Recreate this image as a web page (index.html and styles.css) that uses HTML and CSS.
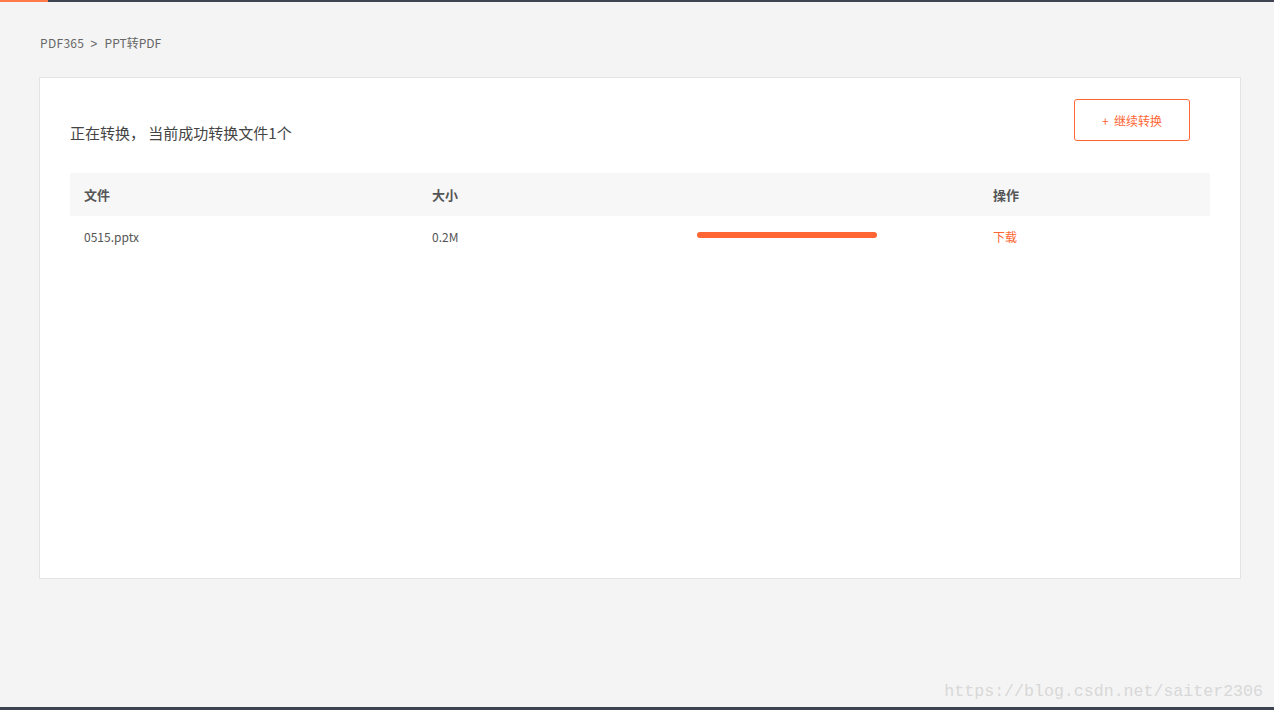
FILE: index.html
```html
<!DOCTYPE html>
<html lang="zh-CN">
<head>
<meta charset="utf-8">
<title>PPT转PDF - PDF365</title>
<link rel="stylesheet" href="styles.css">
</head>
<body>
    <div class="topbar"><span class="topbar-active"></span></div>
    <div class="page">
        <div class="crumbs">
            <a href="#">PDF365</a><span class="sep">&gt;</span><span>PPT转PDF</span>
        </div>
        <div class="card">
            <div class="card-head">
                <p class="status">正在转换， 当前成功转换文件1个</p>
                <button class="more-btn" type="button">+&nbsp; 继续转换</button>
            </div>
            <div class="file-table">
                <div class="row head">
                    <div>文件</div>
                    <div>大小</div>
                    <div></div>
                    <div>操作</div>
                </div>
                <div class="row">
                    <div>0515.pptx</div>
                    <div>0.2M</div>
                    <div><div class="progress"><div class="progress-bar" style="width:100%"></div></div></div>
                    <div><a class="dl" href="#">下载</a></div>
                </div>
            </div>
        </div>
    </div>
    <div class="watermark">https://blog.csdn.net/saiter2306</div>
    <div class="bottombar"></div>
</body>
</html>
```

FILE: styles.css
```css
html, body {
    height: 100%;
}
body {
    margin: 0;
    background-color: #f4f4f4;
    font-family: "Microsoft YaHei", "Noto Sans CJK SC", "Noto Sans", sans-serif;
    color: #555;
    display: flex;
    flex-direction: column;
    position: relative;
}
.topbar {
    height: 2px;
    background-color: #3d4350;
}
.topbar-active {
    display: block;
    width: 48px;
    height: 2px;
    background-color: #ff7a4a;
}
.page {
    flex: 1;
    padding: 0 33px 0 39px;
}
.crumbs {
    font-size: 12px;
    letter-spacing: 0.3px;
    color: #666;
    padding: 32px 0 0 1px;
    height: 43px;
    line-height: 17px;
}
.crumbs a {
    color: #666;
    text-decoration: none;
}
.crumbs .sep {
    margin: 0 7px 0 6px;
    font-family: "Liberation Sans", sans-serif;
}
.crumbs span:last-child {
    letter-spacing: 0;
}
.card {
    background-color: #fff;
    border: 1px solid #e3e3e3;
    height: 500px;
    padding: 0 30px;
}
.card-head {
    display: flex;
    justify-content: space-between;
    align-items: flex-start;
    padding-top: 21px;
    height: 74px;
}
.status {
    margin: 24px 0 0 0;
    font-size: 15px;
    color: #444;
    line-height: 20px;
}
.more-btn {
    width: 116px;
    height: 42px;
    margin-right: 20px;
    border: 1px solid #ff6633;
    border-radius: 3px;
    background: #fff;
    color: #ff6633;
    font-size: 12px;
    font-family: inherit;
}
.file-table {
    font-size: 12px;
}
.row {
    display: grid;
    grid-template-columns: 348px 265px 296px 1fr;
    align-items: center;
    height: 40px;
}
.row > div {
    padding-left: 14px;
}
.row.head {
    background-color: #f7f7f7;
    height: 43px;
    font-size: 13px;
    font-weight: bold;
    color: #555;
}
.progress {
    width: 180px;
    height: 6px;
    border-radius: 3px;
    background-color: #eee;
    margin-top: -2px;
}
.progress-bar {
    height: 6px;
    border-radius: 3px;
    background-color: #ff6633;
}
.dl {
    color: #ff6633;
    text-decoration: none;
}
.watermark {
    position: absolute;
    right: 11px;
    bottom: 9px;
    font-family: "Liberation Mono", monospace;
    font-size: 16.6px;
    color: #d8d8d8;
}
.bottombar {
    height: 3px;
    background-color: #3d4350;
}
```
